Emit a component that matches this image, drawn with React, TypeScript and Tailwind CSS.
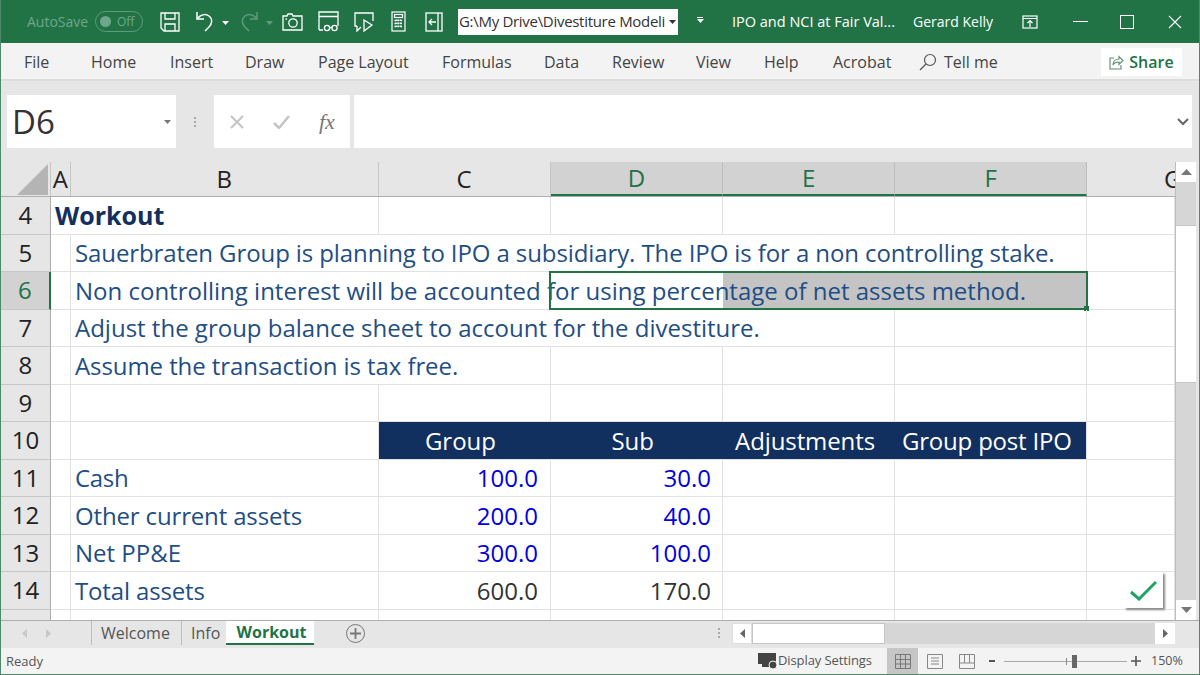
import React from 'react';

const colWidths = ['w-[20px]', 'w-[308px]', 'w-[172px]', 'w-[173px]', 'w-[172px]', 'w-[192px]', 'w-[88px]'];

type RowData = {
  n: number;
  text?: string;
  bold?: boolean;
  // columns whose right grid line is hidden because text runs over it
  hide?: number[];
  vals?: (string | null)[];
  fit?: string;
};

const rows: RowData[] = [
  { n: 4, text: 'Workout', bold: true, hide: [0], fit: 'text-[25px]' },
  { n: 5, text: 'Sauerbraten Group is planning to IPO a subsidiary. The IPO is for a non controlling stake.', hide: [1, 2, 3, 4], fit: 'tracking-[-0.1px]' },
  { n: 6, text: 'Non controlling interest will be accounted for using percentage of net assets method.', hide: [1, 2, 3, 4] },
  { n: 7, text: 'Adjust the group balance sheet to account for the divestiture.', hide: [1, 2, 3] },
  { n: 8, text: 'Assume the transaction is tax free.', hide: [1], fit: 'tracking-[-0.08px]' },
  { n: 9 },
  { n: 10 },
  { n: 11, text: 'Cash', vals: ['100.0', '30.0'], fit: 'tracking-[-0.3px]' },
  { n: 12, text: 'Other current assets', vals: ['200.0', '40.0'], fit: 'tracking-[-0.15px]' },
  { n: 13, text: 'Net PP&E', vals: ['300.0', '100.0'] },
  { n: 14, text: 'Total assets', vals: ['600.0', '170.0'], fit: 'tracking-[-0.15px]' },
];

const IconSave = () => (
  <svg width="20" height="20" viewBox="0 0 20 20" fill="none" stroke="#fff" strokeWidth="1.3">
    <path d="M1 1h18v18H4l-3-3z" />
    <path d="M5 1v6h10V1M5 19v-7h10v7" />
  </svg>
);

const IconUndo = ({ dim }: { dim?: boolean }) => (
  <svg width="18" height="21" viewBox="0 0 18 21" fill="none" stroke={dim ? '#5f9c7e' : '#fff'} strokeWidth="1.5" className={dim ? '-scale-x-100' : ''}>
    <path d="M1 1v7h7" />
    <path d="M1 8c3-4 8-6 12-3 4 3 3 8 0 11l-4 4" />
  </svg>
);

const Caret = ({ color = '#fff' }: { color?: string }) => (
  <svg width="7" height="4" viewBox="0 0 7 4" fill={color}>
    <path d="M0 0h7L3.5 4z" />
  </svg>
);

const IconCamera = () => (
  <svg width="21" height="18" viewBox="0 0 21 18" fill="none" stroke="#fff" strokeWidth="1.3">
    <path d="M1 3h4l1-2h4l1 2h9v14H1z" />
    <circle cx="11" cy="10" r="4.2" />
    <path d="M3.5 6h1.5" />
  </svg>
);

const IconReadMode = () => (
  <svg width="21" height="21" viewBox="0 0 21 21" fill="none" stroke="#fff" strokeWidth="1.3">
    <path d="M1 19V1h19v14M1 5.500h19M1 19h4" />
    <circle cx="9" cy="17" r="2.600" />
    <circle cx="16.500" cy="17" r="2.600" />
    <path d="M11.500 16.500h2.500" />
  </svg>
);

const IconSlideShow = () => (
  <svg width="20" height="20" viewBox="0 0 20 20" fill="none" stroke="#fff" strokeWidth="1.3">
    <path d="M3 14H1V1h18v8" />
    <path d="M3 14v5l4-4" />
    <path d="M10 8l8 5-8 6z" />
  </svg>
);

const IconCalc = () => (
  <svg width="15" height="21" viewBox="0 0 15 21" fill="none" stroke="#fff" strokeWidth="1.2">
    <rect x="1" y="1" width="13" height="19" />
    <rect x="3.500" y="3.500" width="8" height="3" />
    <path d="M3.500 9.500h8M3.500 12.500h8M3.500 15.500h8M5.500 8.500v9M7.500 8.500v9M9.500 8.500v9" strokeWidth="1.500" strokeDasharray="1.500 1.500" />
  </svg>
);

const IconBack = () => (
  <svg width="18" height="20" viewBox="0 0 18 20" fill="none" stroke="#fff" strokeWidth="1.3">
    <rect x="1" y="1" width="16" height="18" />
    <path d="M13 1v18M11 10H4M7 7l-3 3 3 3" />
  </svg>
);

const IconRibbon = () => (
  <svg width="16" height="14" viewBox="0 0 16 14" fill="none" stroke="#fff" strokeWidth="1.2">
    <rect x="1" y="1" width="14" height="12" />
    <path d="M1 3.500h14M8 12V6M5.500 8 8 5.500 10.500 8" />
  </svg>
);

function TitleBar() {
  return (
    <div className="h-[43px] shrink-0 bg-[#217346] flex items-center text-white text-[14px] pl-[26px]">
      <span className="w-[68px] text-[#6ea78b]">AutoSave</span>
      <div className="w-[48px] h-[21px] border border-[#5f9c7e] rounded-full flex items-center px-[4px] gap-[6px] text-[12px] text-[#6ea78b]">
        <div className="w-[11px] h-[11px] rounded-full bg-[#6ea78b]" />
        <span>Off</span>
      </div>
      <div className="ml-[17px] w-[36px]"><IconSave /></div>
      <IconUndo />
      <div className="ml-[8px] w-[18px] mt-[3px]"><Caret /></div>
      <IconUndo dim />
      <div className="ml-[8px] w-[16px] mt-[3px]"><Caret color="#5f9c7e" /></div>
      <div className="w-[36px]"><IconCamera /></div>
      <div className="w-[36px]"><IconReadMode /></div>
      <div className="w-[37px]"><IconSlideShow /></div>
      <div className="w-[34px]"><IconCalc /></div>
      <div className="w-[33px]"><IconBack /></div>
      <div className="w-[220px] h-[26px] bg-white text-[#333] flex items-center justify-between pl-[1px] pr-[2px] overflow-hidden whitespace-nowrap">
        <span className="text-[15px] tracking-[-0.3px]">G:\My Drive\Divestiture Modeli</span>
        <Caret color="#333" />
      </div>
      <div className="ml-[19px] w-[35px] -mt-[4px] flex flex-col items-start gap-[1px]">
        <div className="w-[6px] h-px bg-white" />
        <Caret />
      </div>
      <span className="w-[181px] text-[14.5px] whitespace-nowrap">IPO and NCI at Fair Val...</span>
      <span className="w-[109px] text-[14px] whitespace-nowrap">Gerard Kelly</span>
      <div className="w-[51px]"><IconRibbon /></div>
      <div className="w-[47px]"><div className="w-[15px] h-px bg-white" /></div>
      <div className="w-[48px]"><div className="w-[14px] h-[14px] border border-white" /></div>
      <svg width="14" height="14" viewBox="0 0 14 14" stroke="#fff" strokeWidth="1.1">
        <path d="M1 1l12 12M13 1 1 13" />
      </svg>
    </div>
  );
}

function RibbonTabs() {
  return (
    <div className="h-[38px] shrink-0 bg-[#f3f3f3] border-b-2 border-[#dcdcdc] flex items-center pl-[23px] pr-[17px] pt-[2px] text-[16px] text-[#444] whitespace-nowrap">
      <span className="w-[67px]">File</span>
      <span className="w-[79px]">Home</span>
      <span className="w-[75px]">Insert</span>
      <span className="w-[73px]">Draw</span>
      <span className="w-[124px]">Page Layout</span>
      <span className="w-[102px]">Formulas</span>
      <span className="w-[68px]">Data</span>
      <span className="w-[84px]">Review</span>
      <span className="w-[68px]">View</span>
      <span className="w-[69px]">Help</span>
      <span className="w-[86px]">Acrobat</span>
      <svg width="18" height="18" viewBox="0 0 18 18" fill="none" stroke="#555" strokeWidth="1.2">
        <circle cx="11" cy="7" r="5.500" />
        <path d="M7 11l-6 6" />
      </svg>
      <span className="ml-[7px]">Tell me</span>
      <div className="ml-auto w-[81px] h-[28px] bg-white flex items-center justify-center gap-[5px] text-[#217346] font-semibold">
        <svg width="15" height="15" viewBox="0 0 15 15" fill="none" stroke="#5b8c73" strokeWidth="1.1">
          <path d="M5 3H1v11h11v-4" />
          <path d="M4 10c0-4 3-6 6-6V1.500l4 4-4 4V7c-3 0-5 1-6 3z" />
        </svg>
        <span>Share</span>
      </div>
    </div>
  );
}

function FormulaBar() {
  return (
    <div className="h-[81px] shrink-0 bg-[#e6e6e6] flex items-start pt-[14px] pl-[6px] pr-[7px]">
      <div className="w-[169px] h-[53px] bg-white flex items-center justify-between pl-[5px] pr-[5px]">
        <span className="text-[33px] text-[#333]">D6</span>
        <Caret color="#777" />
      </div>
      <div className="w-[38px] h-[53px] flex flex-col items-center justify-center gap-[2px]">
        <div className="w-[2px] h-[2px] bg-[#aaa]" />
        <div className="w-[2px] h-[2px] bg-[#aaa]" />
        <div className="w-[2px] h-[2px] bg-[#aaa]" />
      </div>
      <div className="w-[136px] h-[53px] bg-white flex items-center pl-[15px]">
        <svg width="16" height="14" viewBox="0 0 16 14" fill="none" stroke="#c4c4c4" strokeWidth="2" className="mr-[28px]">
          <path d="M2 1l12 12M14 1 2 13" />
        </svg>
        <svg width="17" height="14" viewBox="0 0 17 14" fill="none" stroke="#c4c4c4" strokeWidth="2.500" className="mr-[29px]">
          <path d="M1 8l5 5L16 1" />
        </svg>
        <span className="text-[22px] italic text-[#777] font-['Liberation_Serif',serif]">fx</span>
      </div>
      <div className="ml-[4px] flex-1 h-[53px] bg-white flex items-center justify-end pr-[3px]">
        <svg width="12" height="8" viewBox="0 0 12 8" fill="none" stroke="#666" strokeWidth="2">
          <path d="M1 1l5 5 5-5" />
        </svg>
      </div>
    </div>
  );
}

function ColumnHeaders() {
  const plain = 'h-full flex items-center justify-center border-r border-[#c6c6c6] text-[#222]';
  const selected = 'h-full flex items-center justify-center border-r border-[#bdbdbd] bg-[#d2d2d2] text-[#217346] border-b-2 border-b-[#217346]';
  return (
    <div className="h-[35px] shrink-0 flex bg-[#e6e6e6] border-b border-[#aeaeae] text-[24px]">
      <div className="w-[50px] h-full relative border-r border-[#c6c6c6] flex justify-end items-end pr-[2px] pb-[1px]">
        <div className="w-0 h-0 border-l-[31px] border-l-transparent border-b-[31px] border-b-[#b4b4b4]" />
      </div>
      <div className={`${colWidths[0]} ${plain}`}>A</div>
      <div className={`${colWidths[1]} ${plain}`}>B</div>
      <div className={`${colWidths[2]} ${plain}`}>C</div>
      <div className={`${colWidths[3]} ${selected}`}>D</div>
      <div className={`${colWidths[4]} ${selected}`}>E</div>
      <div className={`${colWidths[5]} ${selected}`}>F</div>
      <div className={`${colWidths[6]} h-full flex items-center justify-start pl-[77px] overflow-hidden text-[#222]`}>G</div>
    </div>
  );
}

function SheetRow({ row }: { row: RowData }) {
  const active = row.n === 6;
  const band = row.n === 10;
  const cellBorder = (i: number) => {
    if (band && i >= 2 && i <= 4) return '';
    return row.hide?.includes(i) ? '' : 'border-r border-[#e2e2e2]';
  };
  return (
    <div className="h-[37.5px] shrink-0 flex relative text-[24px] whitespace-nowrap">
      <div className={`w-[50px] flex items-center justify-center border-b border-[#c6c6c6] border-r ${active ? 'bg-[#d2d2d2] text-[#217346] border-r-2 border-r-[#217346]' : 'bg-[#e6e6e6] text-[#222] border-r-[#aeaeae]'}`}>
        {row.n}
      </div>
      {colWidths.map((w, i) => {
        let bg = '';
        if (active && (i === 4 || i === 5)) bg = 'bg-[#c4c4c4]';
        if (band && i >= 2 && i <= 5) bg = 'bg-[#12305f]';
        return <div key={i} className={`${w} h-full border-b border-[#e2e2e2] ${cellBorder(i)} ${bg}`} />;
      })}
      {row.text && (
        <div className={`absolute top-0 h-full flex items-center ${row.fit ?? ''} ${row.bold ? 'left-[54px] font-bold text-[#12305f]' : 'left-[74px] text-[#1f4e84]'}`}>
          {row.text}
        </div>
      )}
      {row.vals && (
        <div className="absolute top-0 left-[377px] h-full flex items-center">
          <span className={`w-[160px] text-right ${row.n === 14 ? 'text-[#333]' : 'text-[#0000e0]'}`}>{row.vals[0]}</span>
          <span className={`ml-[12px] w-[161px] text-right ${row.n === 14 ? 'text-[#333]' : 'text-[#0000e0]'}`}>{row.vals[1]}</span>
        </div>
      )}
      {band && (
        <div className="absolute top-0 left-[377px] h-full flex items-center text-white">
          <span className="w-[118px] text-right">Group</span>
          <span className="w-[158px] text-right">Sub</span>
          <span className="ml-[81px] w-[140px] text-right tracking-[-0.1px]">Adjustments</span>
          <span className="ml-[27px] w-[169px] text-right tracking-[-0.2px]">Group post IPO</span>
        </div>
      )}
      {active && (
        <div className="absolute -top-px left-[548px] w-[539px] h-[39px] border-2 border-[#217346]">
          <div className="absolute -right-[3px] -bottom-[3px] w-[5px] h-[5px] bg-[#217346]" />
        </div>
      )}
    </div>
  );
}

function VScroll() {
  return (
    <div className="w-[21px] shrink-0 flex flex-col bg-[#d6d6d6] border-l border-[#bdbdbd]">
      <div className="h-[20px] bg-white flex items-center justify-center"><svg width="11" height="6" viewBox="0 0 11 6" fill="#777"><path d="M0 6h11L5.500 0z" /></svg></div>
      <div className="h-[43px]" />
      <div className="h-[158px] bg-white border-y border-[#c4c4c4]" />
      <div className="flex-1" />
      <div className="h-[20px] bg-white flex items-center justify-center"><svg width="11" height="6" viewBox="0 0 11 6" fill="#777"><path d="M0 0h11L5.500 6z" /></svg></div>
    </div>
  );
}

function SheetArea() {
  return (
    <div className="h-[458px] shrink-0 flex bg-[#e6e6e6] pr-[3px] relative">
      <div className="w-[1176px] flex flex-col overflow-hidden bg-white">
        <ColumnHeaders />
        {rows.map((r) => (
          <SheetRow key={r.n} row={r} />
        ))}
        <div className="flex-1 flex">
          <div className="w-[50px] bg-[#e6e6e6] border-r border-[#aeaeae]" />
          {colWidths.map((w, i) => (
            <div key={i} className={`${w} border-r border-[#e2e2e2]`} />
          ))}
        </div>
      </div>
      <VScroll />
      {/* quick analysis style tick */}
      <div className="absolute left-[1123px] top-[410px] w-[39px] h-[36px] bg-white shadow-[2px_2px_2px_#888] flex items-center justify-center">
        <svg width="27" height="21" viewBox="0 0 27 21" fill="none" stroke="#21a366" strokeWidth="3">
          <path d="M1 12l8 7L26 2" />
        </svg>
      </div>
    </div>
  );
}

function SheetTabs() {
  return (
    <div className="h-[28px] shrink-0 bg-[#e6e6e6] border-t border-[#aeaeae] flex items-center text-[16px] text-[#555] whitespace-nowrap pr-[24px] pb-[3px]">
      <div className="w-[90px] flex items-center pl-[21px] gap-[19px]">
        <svg width="5" height="9" viewBox="0 0 5 9" fill="#c8c8c8"><path d="M5 0v9L0 4.500z" /></svg>
        <svg width="5" height="9" viewBox="0 0 5 9" fill="#c8c8c8"><path d="M0 0v9l5-4.500z" /></svg>
      </div>
      <div className="w-[90px] h-full border-l border-[#bdbdbd] flex items-center pl-[9px]">Welcome</div>
      <div className="w-[45px] h-full border-l border-[#bdbdbd] flex items-center pl-[9px]">Info</div>
      <div className="w-[88px] h-full bg-white border-b-2 border-[#217346] font-bold text-[#217346] flex items-center justify-center pl-[3px]">Workout</div>
      <div className="ml-[32px] w-[19px] h-[19px] rounded-full border border-[#777] flex items-center justify-center">
        <svg width="11" height="11" viewBox="0 0 11 11" stroke="#777" strokeWidth="1.800"><path d="M5.500 0v11M0 5.500h11" /></svg>
      </div>
      <div className="ml-[352px] w-[3px] flex flex-col gap-[2px] items-center">
        <div className="w-[2px] h-[2px] bg-[#aaa]" />
        <div className="w-[2px] h-[2px] bg-[#aaa]" />
        <div className="w-[2px] h-[2px] bg-[#aaa]" />
      </div>
      <div className="ml-[12px] flex-1 h-[21px] flex bg-[#d6d6d6]">
        <div className="w-[20px] bg-white flex items-center justify-center border border-[#dedede]"><svg width="5" height="9" viewBox="0 0 5 9" fill="#666"><path d="M5 0v9L0 4.500z" /></svg></div>
        <div className="w-[133px] bg-white border border-[#c4c4c4]" />
        <div className="flex-1" />
        <div className="w-[20px] bg-white flex items-center justify-center"><svg width="5" height="9" viewBox="0 0 5 9" fill="#666"><path d="M0 0v9l5-4.500z" /></svg></div>
      </div>
    </div>
  );
}

function StatusBar() {
  return (
    <div className="flex-1 bg-[#f3f3f3] flex items-center text-[#555] text-[14px] pl-[5px] whitespace-nowrap">
      <span className="w-[752px] text-[13px] pt-[1px]">Ready</span>
      <svg width="20" height="18" viewBox="0 0 20 18" className="shrink-0">
        <rect x="0" y="1" width="18" height="11" fill="#444" />
        <rect x="4" y="12" width="8" height="3" fill="#444" />
        <circle cx="15" cy="13" r="4" fill="#444" stroke="#f3f3f3" />
      </svg>
      <span className="w-[109px] text-[13px] tracking-[-0.1px]">Display Settings</span>
      <div className="w-[31px] h-full bg-[#c6c6c6] flex items-center justify-center">
        <svg width="16" height="15" viewBox="0 0 16 15" fill="none" stroke="#777"><path d="M.5.500h15v14H.5zM5.500.500v14M10.500.500v14M.5 5.500h15M.5 10h15" /></svg>
      </div>
      <div className="w-[33px] flex justify-center">
        <svg width="16" height="15" viewBox="0 0 16 15" fill="none" stroke="#888"><path d="M.5.500h15v14H.5zM4 4h8M4 7h8M4 10h8" /></svg>
      </div>
      <div className="w-[32px] flex justify-center">
        <svg width="16" height="15" viewBox="0 0 16 15" fill="none" stroke="#888"><path d="M.5.500h15v14H.5zM.5 9h15M5.500.500V9M10.500.500V9" /></svg>
      </div>
      <div className="ml-[6px] w-[6px] h-[2px] bg-[#555]" />
      <div className="ml-[9px] w-[123px] h-px bg-[#aaa] relative">
        <div className="absolute left-[62px] -top-[3px] w-px h-[7px] bg-[#888]" />
        <div className="absolute left-[68px] -top-[6px] w-[5px] h-[13px] bg-[#666]" />
      </div>
      <svg width="10" height="10" viewBox="0 0 10 10" stroke="#555" strokeWidth="1.600" className="ml-[4px]"><path d="M5 0v10M0 5h10" /></svg>
      <span className="ml-[10px] text-[12.5px]">150%</span>
    </div>
  );
}

export default function App() {
  return (
    <div className="w-[1200px] h-[675px] flex flex-col overflow-hidden font-['Open_Sans',sans-serif] border-x border-b border-[#4d8a6a]">
      <TitleBar />
      <RibbonTabs />
      <FormulaBar />
      <SheetArea />
      <SheetTabs />
      <StatusBar />
    </div>
  );
}
